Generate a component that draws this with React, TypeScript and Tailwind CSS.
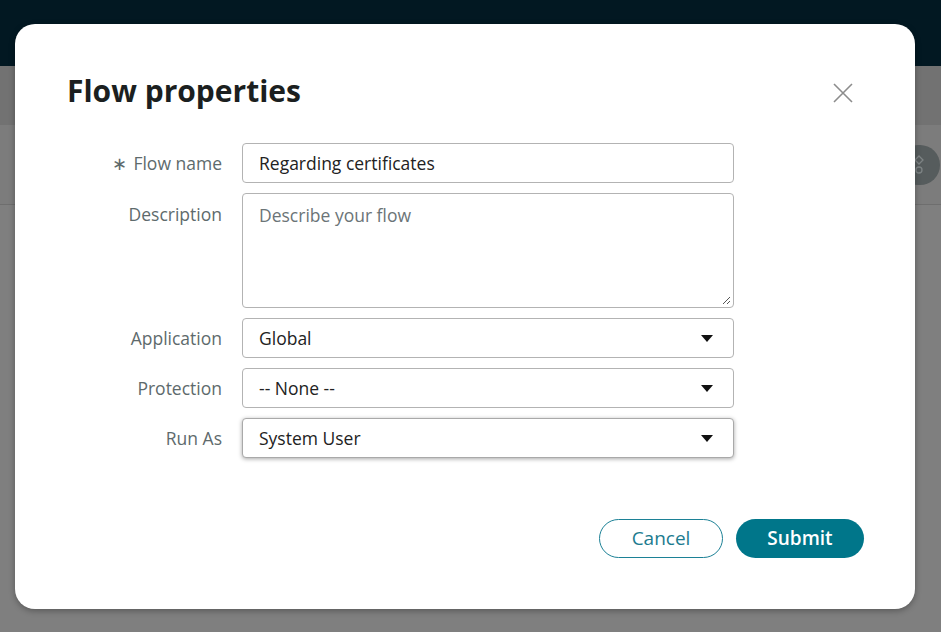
import React from 'react';

const fieldFont = { fontFamily: '"Open Sans", "Liberation Sans", sans-serif' };

const Caret = () => (
  <svg width="12" height="7" viewBox="0 0 12 7" className="shrink-0">
    <path d="M0 0 L12 0 L6 7 Z" fill="#111" />
  </svg>
);

const SelectBox: React.FC<{ value: string; focused?: boolean }> = ({ value, focused }) => (
  <div
    className={`h-10 w-full rounded-[4px] border bg-white flex items-center justify-between pl-4 pr-[20px] text-[17.5px] text-[#222] ${
      focused ? 'border-[#a9a9a9] shadow-[0_1px_4px_rgba(0,0,0,0.35)]' : 'border-[#b3b3b3]'
    }`}
  >
    <span>{value}</span>
    <Caret />
  </div>
);

export default function App() {
  return (
    <div className="relative w-[941px] h-[632px] overflow-hidden bg-[#7f7f7f]" style={fieldFont}>
      {/* page behind the overlay */}
      <div className="h-[66px] bg-[#021822]" />
      <div className="h-[59px] bg-[#727272]" />
      <div className="h-[80px] bg-[#7c7c7c] border-b border-[#6e6e6e] flex justify-end items-center pr-px">
        <div className="w-[42px] h-[40px] rounded-full bg-[#565c5d] flex items-center pl-[13px]">
          <svg width="14" height="22" viewBox="0 0 14 22" fill="none" stroke="#7e8485" strokeWidth="1.3">
            <path d="M8 2 L12 6 L8 10 L4 6 Z" />
            <circle cx="8" cy="16" r="3" />
            <path d="M1 12 V19 M1 12 H4" />
          </svg>
        </div>
      </div>

      {/* modal */}
      <div className="absolute left-[15px] top-[24px] w-[900px] h-[585px] rounded-[20px] bg-white shadow-[0_2px_6px_rgba(0,0,0,0.3)] px-[52px] pt-[48px]">
        <div className="flex items-start justify-between">
          <h1 className="text-[30px] leading-[38px] font-bold text-[#1b1f20]">Flow properties</h1>
          <button className="mt-[11px] mr-[10px]">
            <svg width="20" height="20" viewBox="0 0 20 20" stroke="#8c8c8c" strokeWidth="1.6">
              <path d="M1 1 L19 19 M19 1 L1 19" />
            </svg>
          </button>
        </div>

        <div className="mt-[33px] grid grid-cols-[155px_492px] gap-x-5 gap-y-[10px]">
          <label className="flex items-center justify-end text-[17.5px] text-[#5e6a6c] h-10">
            <span className="mr-[6px] text-[18px] text-[#5e6a6c]">∗</span>Flow name
          </label>
          <div className="h-10 rounded-[4px] border border-[#b3b3b3] flex items-center px-4 text-[17.5px] text-[#222]">
            Regarding certificates
          </div>

          <label className="flex justify-end pt-[8px] text-[17.5px] text-[#5e6a6c]">Description</label>
          <div className="relative h-[115px] rounded-[4px] border border-[#b3b3b3] px-4 pt-[8px] text-[17.5px] text-[#6b7477]">
            Describe your flow
            <svg width="9" height="9" viewBox="0 0 9 9" className="absolute right-[2px] bottom-[2px]" stroke="#555" strokeWidth="1">
              <path d="M8 1 L1 8 M8 5 L5 8" />
            </svg>
          </div>

          <label className="flex items-center justify-end text-[17.5px] text-[#5e6a6c] h-10">Application</label>
          <SelectBox value="Global" />

          <label className="flex items-center justify-end text-[17.5px] text-[#5e6a6c] h-10">Protection</label>
          <SelectBox value="-- None --" />

          <label className="flex items-center justify-end text-[17.5px] text-[#5e6a6c] h-10">Run As</label>
          <SelectBox value="System User" focused />
        </div>

        <div className="absolute right-[51px] bottom-[51px] flex gap-[13px]">
          <button className="w-[124px] h-[39px] rounded-full border border-[#1c8196] text-[#1c7b8f] text-[19px]">
            Cancel
          </button>
          <button className="w-[128px] h-[39px] rounded-full bg-[#00768a] text-white text-[19px] font-semibold">
            Submit
          </button>
        </div>
      </div>
    </div>
  );
}
